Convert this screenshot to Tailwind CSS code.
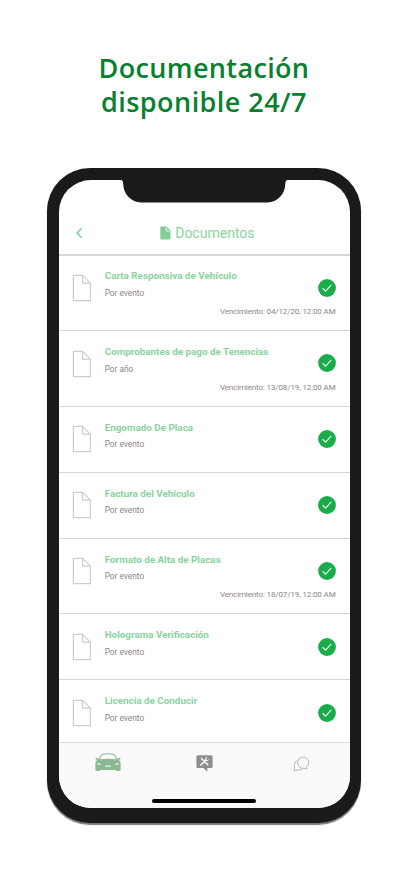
<!DOCTYPE html>
<html lang="es">
<head>
<meta charset="utf-8">
<title>Documentos</title>
<script src="https://cdn.jsdelivr.net/npm/@tailwindcss/browser@4"></script>
</head>
<body class="bg-white w-[408px] h-[883px] overflow-hidden font-['Roboto',sans-serif]">
<svg class="hidden">
  <symbol id="doc" viewBox="0 0 20 28"><path d="M1.4 1.4H10.6L18.4 9.2V26.6H1.4ZM10.6 1.4V9.2H18.4" fill="none" stroke="#cdcdcd" stroke-width="1.2"/></symbol>
  <symbol id="ok" viewBox="0 0 18 18"><circle cx="9" cy="9" r="8.9" fill="#1aab4b"/><path d="M4.7 9.3L7.6 12.1L13.3 5.9" fill="none" stroke="#e0f8e8" stroke-width="1.2"/></symbol>
</svg>
<h1 class="h-[167.5px] pt-[51px] text-center font-['Open_Sans',sans-serif] font-semibold text-[27px] leading-[34px] text-[#08802f]">
  <span class="block tracking-[0.35px]">Documentación</span><span class="block tracking-[0.45px]">disponible 24/7</span>
</h1>
<main class="relative ml-[46.5px] w-[314.5px] h-[655px] rounded-[43px] bg-[#1a1a1a] pt-[12.2px] pl-[12.7px] pr-[11.5px] pb-[14.5px] shadow-[0_2px_1px_#777]">
  <div class="h-full rounded-[32px] overflow-hidden bg-white flex flex-col">
    <header class="h-[76.8px] shrink-0 border-b-2 border-[#d8d8d8] flex items-end pb-[10px] pl-[16px]">
      <svg class="w-[9px] h-[12px] mb-[5px]" viewBox="0 0 9 12"><path d="M6.7 1.2L2 6L6.7 10.8" fill="none" stroke="#83cf98" stroke-width="1.6"/></svg>
      <div class="flex items-center ml-[76px] text-[14.1px] leading-[22px] text-[#8dd3a0] whitespace-nowrap">
        <svg class="w-[11px] h-[14px] mr-[4px]" viewBox="0 0 11 14"><path d="M1.3 .5H6.6L10.5 4.6V12.2Q10.5 13.5 9.2 13.5H1.6Q.3 13.5 .3 12.2V1.6Q.3 .5 1.3 .5Z" fill="#83cf98"/><path d="M6.3 1.5V5H9.8" fill="none" stroke="#fff" stroke-width=".9"/></svg>
        <span class="tracking-[-0.05px]">Documentos</span>
      </div>
    </header>
    <ul class="flex-1 min-h-0 overflow-hidden text-[#8c8585]">
      <li class="h-[74.6px] border-b border-[#d6d6d6] flex pl-[13px] pr-[14px]">
        <svg class="w-5 h-7 mt-[17.5px]"><use href="#doc"/></svg>
        <div class="ml-[12.5px] pt-[12px] flex-1 min-w-0"><h2 class="text-[9.85px] leading-[15px] font-bold text-[#8ad39e]">Carta Responsiva de Vehículo</h2><p class="text-[8.3px] leading-[12px] mt-[3.5px]">Por evento</p><p class="text-[8px] leading-[12px] mt-[7px] -mr-[18px] text-right tracking-[-0.13px]">Vencimiento: 04/12/20, 12:00 AM</p></div>
        <svg class="w-[18px] h-[18px] mt-[22.4px]"><use href="#ok"/></svg>
      </li>
      <li class="h-[75.8px] border-b border-[#d6d6d6] flex pl-[13px] pr-[14px]">
        <svg class="w-5 h-7 mt-[18.5px]"><use href="#doc"/></svg>
        <div class="ml-[12.5px] pt-[13px] flex-1 min-w-0"><h2 class="text-[9.85px] leading-[15px] font-bold text-[#8ad39e]">Comprobantes de pago de Tenencias</h2><p class="text-[8.3px] leading-[12px] mt-[3.5px]">Por año</p><p class="text-[8px] leading-[12px] mt-[7px] -mr-[18px] text-right tracking-[-0.13px]">Vencimiento: 13/08/19, 12:00 AM</p></div>
        <svg class="w-[18px] h-[18px] mt-[23.4px]"><use href="#ok"/></svg>
      </li>
      <li class="h-[65.9px] border-b border-[#d6d6d6] flex pl-[13px] pr-[14px]">
        <svg class="w-5 h-7 mt-[18.5px]"><use href="#doc"/></svg>
        <div class="ml-[12.5px] pt-[13px] flex-1 min-w-0"><h2 class="text-[9.85px] leading-[15px] font-bold text-[#8ad39e]">Engomado De Placa</h2><p class="text-[8.3px] leading-[12px] mt-[3.5px]">Por evento</p></div>
        <svg class="w-[18px] h-[18px] mt-[23.4px]"><use href="#ok"/></svg>
      </li>
      <li class="h-[65.9px] border-b border-[#d6d6d6] flex pl-[13px] pr-[14px]">
        <svg class="w-5 h-7 mt-[18.5px]"><use href="#doc"/></svg>
        <div class="ml-[12.5px] pt-[13px] flex-1 min-w-0"><h2 class="text-[9.85px] leading-[15px] font-bold text-[#8ad39e]">Factura del Vehículo</h2><p class="text-[8.3px] leading-[12px] mt-[3.5px]">Por evento</p></div>
        <svg class="w-[18px] h-[18px] mt-[23.4px]"><use href="#ok"/></svg>
      </li>
      <li class="h-[75.8px] border-b border-[#d6d6d6] flex pl-[13px] pr-[14px]">
        <svg class="w-5 h-7 mt-[18.5px]"><use href="#doc"/></svg>
        <div class="ml-[12.5px] pt-[13px] flex-1 min-w-0"><h2 class="text-[9.85px] leading-[15px] font-bold text-[#8ad39e]">Formato de Alta de Placas</h2><p class="text-[8.3px] leading-[12px] mt-[3.5px]">Por evento</p><p class="text-[8px] leading-[12px] mt-[7px] -mr-[18px] text-right tracking-[-0.13px]">Vencimiento: 18/07/19, 12:00 AM</p></div>
        <svg class="w-[18px] h-[18px] mt-[23.4px]"><use href="#ok"/></svg>
      </li>
      <li class="h-[65.9px] border-b border-[#d6d6d6] flex pl-[13px] pr-[14px]">
        <svg class="w-5 h-7 mt-[18.5px]"><use href="#doc"/></svg>
        <div class="ml-[12.5px] pt-[13px] flex-1 min-w-0"><h2 class="text-[9.85px] leading-[15px] font-bold text-[#8ad39e]">Holograma Verificación</h2><p class="text-[8.3px] leading-[12px] mt-[3.5px]">Por evento</p></div>
        <svg class="w-[18px] h-[18px] mt-[23.4px]"><use href="#ok"/></svg>
      </li>
      <li class="h-[61px] flex pl-[13px] pr-[14px]">
        <svg class="w-5 h-7 mt-[18.5px]"><use href="#doc"/></svg>
        <div class="ml-[12.5px] pt-[13px] flex-1 min-w-0"><h2 class="text-[9.85px] leading-[15px] font-bold text-[#8ad39e]">Licencia de Conducir</h2><p class="text-[8.3px] leading-[12px] mt-[3.5px]">Por evento</p></div>
        <svg class="w-[18px] h-[18px] mt-[23.4px]"><use href="#ok"/></svg>
      </li>
    </ul>
    <nav class="h-[66.5px] shrink-0 bg-[#fafafa] border-t border-[#dedede] flex flex-col justify-between items-center pt-[10px] pb-[5.2px]">
      <div class="grid grid-cols-3 w-full justify-items-center">
        <svg class="w-[26px] h-[19px]" viewBox="0 0 26 19"><path d="M4 6.5C5.4 3.5 6.3 2 7.6 1.3Q13 .3 18.4 1.3C19.7 2 20.6 3.5 22 6.5" fill="none" stroke="#8cb894" stroke-width="1.1"/><path d="M.4 5.1Q2.6 4.4 3.8 6.2Q13 5.5 22.2 6.2Q23.4 4.4 25.6 5.1Q25.8 6.3 23.9 6.9Q25.6 8.3 25.6 10.5V17Q25.6 18 24.6 18H21.7Q20.7 18 20.7 17V16.9H5.3V17Q5.3 18 4.3 18H1.4Q.4 18 .4 17V10.5Q.4 8.3 2.1 6.9Q.2 6.3 .4 5.1Z" fill="#8cb894"/><path d="M2.4 9.8L6.2 11.3Q5.7 11.9 4.8 11.8L2.5 11.4ZM23.6 9.8L19.8 11.3Q20.3 11.9 21.2 11.8L23.5 11.4ZM10 12.4H16L15.6 13.8H10.4Z" fill="#f3f8f3"/></svg>
        <svg class="w-[17px] h-[19px] mt-px" viewBox="0 0 17 19"><path d="M2 1.2H15Q16.6 1.2 16.6 2.8V12.4Q16.6 14 15 14H11.3V17.8L7.4 14H2Q.4 14 .4 12.4V2.8Q.4 1.2 2 1.2Z" fill="#8e8e8e"/><path d="M6.2 5.2L11.8 10.8M4.8 11L10 6" fill="none" stroke="#fafafa" stroke-width="1.5" stroke-linecap="round"/><path d="M11.1 3.4A1.6 1.6 0 1 0 12.6 5.4" fill="none" stroke="#fafafa" stroke-width="1"/><path d="M4.4 3.5L6.2 4L6.6 5.5L5.8 6Z" fill="#fafafa"/></svg>
        <svg class="w-[16px] h-[16px] mt-[3px]" viewBox="0 0 16 16"><path d="M13.4 11.3A5.6 5.6 0 1 0 10.7 12.3Q12.5 12.9 14.2 12.6Q13.4 12.1 13.4 11.3ZM3.6 4.4Q.4 7.3 1.6 11.5Q1.7 13.4 .9 14.7Q3 14.8 4.6 14Q7.5 14.7 9.6 12.5" fill="none" stroke="#a5a5a5" stroke-width=".8"/></svg>
      </div>
      <div class="w-[104px] h-[3.6px] rounded-full bg-black"></div>
    </nav>
  </div>
  <svg class="absolute left-[72.5px] top-[11.5px] w-[170px] h-[24px]" viewBox="0 0 170 24"><path d="M0 0H170V.8H169.5Q166.5 .8 166.3 4.5A18 18.8 0 0 1 148.5 23.5H22A18 18.8 0 0 1 4.2 4.5Q4 .8 1 .8H0Z" fill="#1a1a1a"/></svg>
</main>
</body>
</html>
